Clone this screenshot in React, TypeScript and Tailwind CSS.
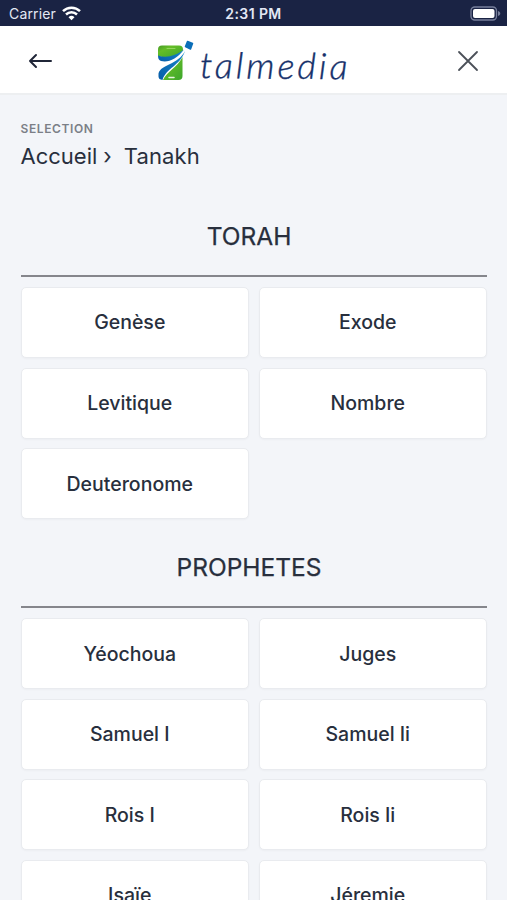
const sections = [
  { title: 'TORAH', books: ['Genèse', 'Exode', 'Levitique', 'Nombre', 'Deuteronome'] },
  { title: 'PROPHETES', books: ['Yéochoua', 'Juges', 'Samuel I', 'Samuel Ii', 'Rois I', 'Rois Ii', 'Isaïe', 'Jéremie'] },
];

function StatusBar() {
  return (
    <div className="grid h-[26px] grid-cols-3 items-center bg-[#1a2344] text-[14px] leading-none text-[#e3e8f4]">
      <div className="flex items-center gap-[6px] pl-[9px] pt-px">
        <span className="tracking-[0.15px]">Carrier</span>
        <svg width="19" height="15" viewBox="0 0 19 15" fill="none" stroke="#fff" strokeWidth="2.5">
          <path d="M1 5.1a12.2 12.2 0 0 1 17 0" />
          <path d="M4 8.5a8 8 0 0 1 11 0" />
          <path d="M6.5 11.2a4.4 4.4 0 0 1 6 0L9.5 14.3Z" fill="#fff" stroke="none" />
        </svg>
      </div>
      <span className="pt-[2px] text-center text-[14px] font-semibold tracking-[0.4px]">2:31 PM</span>
      <div className="flex justify-end pr-[6px]">
        <svg width="31" height="15" viewBox="0 0 31 15">
          <rect x="1" y="1" width="25.5" height="13" rx="3.7" fill="none" stroke="#777f9b" strokeWidth="1.3" />
          <rect x="3" y="3" width="21.5" height="9" rx="2" fill="#fff" />
          <path d="M28 5v5c3-1 3-4 0-5Z" fill="#777f9b" />
        </svg>
      </div>
    </div>
  );
}

function Logo() {
  return (
    <div className="flex h-11 w-[195px] items-center">
      <svg width="38" height="44" viewBox="0 0 38 44" className="shrink-0">
        <defs>
          <linearGradient id="leaf" x1="0" y1="0" x2="1" y2="1">
            <stop offset="0" stopColor="#459a26" />
            <stop offset=".3" stopColor="#65bd27" />
            <stop offset="1" stopColor="#3ca62c" />
          </linearGradient>
          <linearGradient id="wave" x1="0" y1="1" x2="1" y2="0">
            <stop offset="0" stopColor="#075da9" />
            <stop offset="1" stopColor="#1788c9" />
          </linearGradient>
        </defs>
        <path d="M2 10.500q0-4 4-4h17q4 0 4 4v1C20 18 11 20 2 17Z" fill="url(#leaf)" />
        <path d="M2 16.500c9 3 18 0 26-6C21 20 12 24 5 22q-3-1-3-5.500Z" fill="url(#wave)" />
        <path d="M26.500 18v19q0 4-4 4H7c4-9 14-12 19.500-23Z" fill="url(#leaf)" />
        <path d="M29 12C22 26 5 25 2.500 34.500v3q0 3 4 3.500C10 29 24 27 29 12Z" fill="url(#wave)" />
        <path d="M11 9.500h8" stroke="#92d65d" strokeWidth="1" strokeLinecap="round" />
        <path d="M13 38.500h5" stroke="#e8f4df" strokeWidth="1.500" strokeLinecap="round" />
        <path d="m31.500 2.500 5 2-2 5.500-5-2.500Z" fill="#0b6eb8" stroke="#0b6eb8" strokeWidth="1.500" strokeLinejoin="round" />
      </svg>
      <span className="ml-[6px] mt-[7px] inline-block origin-left rotate-[0.5deg] font-['Lato'] text-[36px] font-light italic leading-none tracking-[3px] text-[#15306a] [-webkit-text-stroke:0.4px_#15306a]">
        talmedia
      </span>
    </div>
  );
}

function Header() {
  return (
    <header className="grid h-[69px] grid-cols-[80px_1fr_80px] items-center border-b-2 border-[#edeff1] bg-white pt-[2px]">
      <button className="pl-7" aria-label="Retour">
        <svg width="24" height="16" viewBox="0 0 24 16" fill="none" stroke="#202638" strokeWidth="2" strokeLinecap="round" strokeLinejoin="round">
          <path d="M23 8H2M8 2 2 8l6 6" />
        </svg>
      </button>
      <div className="flex justify-center"><Logo /></div>
      <button className="flex justify-end pr-7" aria-label="Fermer">
        <svg width="22" height="22" viewBox="0 0 22 22" stroke="#4b5058" strokeWidth="1.8" strokeLinecap="round">
          <path d="m2 2 18 18M20 2 2 20" />
        </svg>
      </button>
    </header>
  );
}

export default function App() {
  return (
    <div className="h-[900px] w-[507px] overflow-hidden bg-[#f3f5f9] font-['Inter',sans-serif] text-[#282f3d]">
      <StatusBar />
      <Header />
      <main className="px-[20.5px] pt-[26px]">
        <div className="text-[12px] font-semibold leading-[15px] tracking-[0.6px] text-[#7b7f87]">SELECTION</div>
        <nav className="mt-[4px] flex h-[32px] items-center text-[22px] leading-8">
          <span>Accueil</span>
          <span className="ml-[6px]">›</span>
          <span className="ml-[12px] tracking-[0.1px]">Tanakh</span>
        </nav>
        <div className="pt-[36px]">
          {sections.map(({ title, books }) => (
            <section key={title} className="mb-[20px]">
              <h2 className="flex h-[69px] justify-center border-b-2 border-[#85868c] pt-[10px] pr-[9px] text-[24.5px] leading-[36px] [-webkit-text-stroke:0.25px_#282f3d]">{title}</h2>
              <div className="mt-[10px] grid grid-cols-2 gap-x-[10px] gap-y-[9.6px]">
                {books.map((book) => (
                  <button key={book} className="h-[71px] rounded-[5px] border border-[#e9ebef] bg-white pr-[9.5px] pt-px text-[19.5px] font-medium shadow-[0_1px_2px_rgba(0,0,0,0.03)]">
                    {book}
                  </button>
                ))}
              </div>
            </section>
          ))}
        </div>
      </main>
    </div>
  );
}
